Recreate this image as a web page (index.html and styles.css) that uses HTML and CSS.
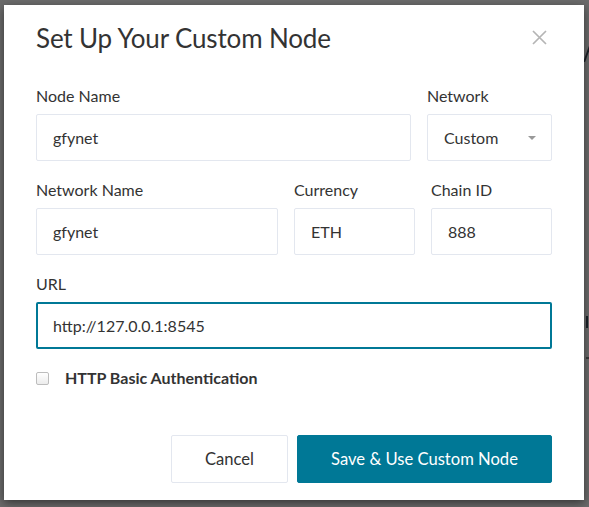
FILE: index.html
```html
<!DOCTYPE html>
<html lang="en">
<head>
<meta charset="utf-8">
<title>Set Up Your Custom Node</title>
<link rel="stylesheet" href="styles.css">
</head>
<body>
<div class="backdrop" aria-hidden="true">
  <span class="bg-mark bg-mark-a"></span>
  <span class="bg-mark bg-mark-i"></span>
  <span class="bg-mark bg-mark-dot"></span>
</div>
<div class="modal" role="dialog">
  <div class="modal-header">
    <h2 class="modal-title">Set Up Your Custom Node</h2>
    <button class="close" aria-label="Close">
      <svg width="15" height="15" viewBox="0 0 15 15"><path d="M1 1 L14 14 M14 1 L1 14" stroke="#b5b5b5" stroke-width="1.7" fill="none"/></svg>
    </button>
  </div>
  <div class="modal-body">
    <div class="row row-1">
      <label class="field">
        <span class="label">Node Name</span>
        <span class="input">gfynet</span>
      </label>
      <label class="field">
        <span class="label">Network</span>
        <span class="input select">Custom<span class="caret"></span></span>
      </label>
    </div>
    <div class="row row-2">
      <label class="field">
        <span class="label">Network Name</span>
        <span class="input">gfynet</span>
      </label>
      <label class="field">
        <span class="label">Currency</span>
        <span class="input">ETH</span>
      </label>
      <label class="field">
        <span class="label">Chain ID</span>
        <span class="input">888</span>
      </label>
    </div>
    <div class="row">
      <label class="field">
        <span class="label">URL</span>
        <span class="input focused">http://127.0.0.1:8545</span>
      </label>
    </div>
    <label class="check">
      <span class="box"></span>
      <span class="check-text">HTTP Basic Authentication</span>
    </label>
  </div>
  <div class="modal-footer">
    <button class="btn btn-default">Cancel</button>
    <button class="btn btn-primary">Save &amp; Use Custom Node</button>
  </div>
</div>
</body>
</html>
```
FILE: styles.css
```css
* { box-sizing: border-box; }
html, body { margin: 0; padding: 0; }
body {
  width: 589px;
  height: 507px;
  overflow: hidden;
  background: #6b6b6b;
  font-family: Lato, "Open Sans", sans-serif;
  color: #333;
  position: relative;
}
.backdrop { position: absolute; inset: 0; }
.bg-mark { position: absolute; background: #1c2128; }
.bg-mark-a { left: 586px; top: 46px; width: 2px; height: 16px; transform: skewX(-20deg); }
.bg-mark-i { left: 586px; top: 316px; width: 2px; height: 12px; }
.bg-mark-dot { left: 586px; top: 357px; width: 3px; height: 2px; background: #3a3a3a; }

.modal {
  position: absolute;
  left: 4px;
  top: 5px;
  width: 580px;
  height: 495px;
  background: #fff;
  box-shadow: 0 3px 9px rgba(0,0,0,0.5);
  padding: 0 32px;
}
.modal-header {
  display: flex;
  justify-content: space-between;
  align-items: center;
  padding-top: 15px;
}
.modal-title {
  margin: 0;
  font-size: 26px;
  font-weight: 400;
  line-height: 36px;
  color: #333;
  letter-spacing: -0.15px;
}
.close {
  border: 0;
  background: none;
  padding: 0;
  margin-right: 5px;
  margin-top: -2px;
  display: flex;
}
.modal-body { padding-top: 29px; }
.row {
  display: grid;
  grid-template-columns: 1fr;
  gap: 16px;
  margin-bottom: 18px;
}
.row-1 { grid-template-columns: 3fr 1fr; }
.row-2 { grid-template-columns: 2fr 1fr 1fr; }
.field { display: flex; flex-direction: column; }
.label {
  font-size: 16px;
  line-height: 22px;
  margin-bottom: 7px;
  color: #333;
}
.input {
  height: 47px;
  border: 1px solid #e3e7ef;
  border-radius: 2px;
  padding: 0 16px;
  display: flex;
  align-items: center;
  font-size: 16px;
  color: #333;
}
.input.focused {
  border: 2px solid #007896;
  padding: 0 15px;
}
.select { position: relative; justify-content: space-between; }
.caret {
  width: 0; height: 0;
  border-left: 4px solid transparent;
  border-right: 4px solid transparent;
  border-top: 4px solid #999;
  margin-right: -1px;
}
.check {
  display: flex;
  align-items: center;
  gap: 16px;
  margin-top: 3px;
}
.box {
  width: 13px;
  height: 13px;
  border: 1px solid #bdbdbd;
  border-radius: 2px;
  background: linear-gradient(#fff, #ececec);
}
.check-text {
  font-size: 16px;
  font-weight: 700;
  line-height: 22px;
  color: #333;
}
.modal-footer {
  display: flex;
  justify-content: flex-end;
  gap: 9px;
  margin-top: 46px;
}
.btn {
  height: 48px;
  border-radius: 2px;
  font-family: Lato, sans-serif;
  font-size: 16.6px;
  padding: 0;
}
.btn-default {
  width: 117px;
  background: #fff;
  border: 1px solid #e3e7ef;
  color: #333;
}
.btn-primary {
  width: 255px;
  background: #007896;
  border: 1px solid #007896;
  color: #fff;
}
```
